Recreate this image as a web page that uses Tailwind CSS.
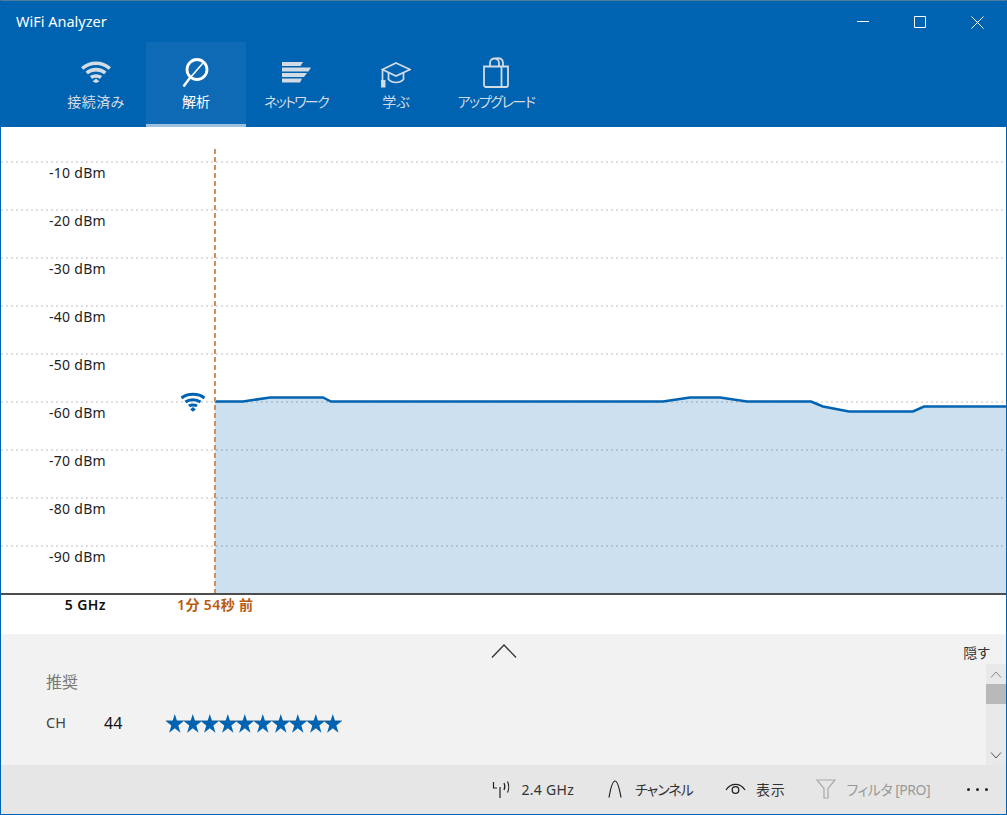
<!DOCTYPE html>
<html lang="ja">
<head>
  <meta charset="UTF-8" />
  <title>WiFi Analyzer</title>
  <script src="https://cdn.jsdelivr.net/npm/@tailwindcss/browser@4"></script>
</head>
<body class="bg-white overflow-hidden">
  <div class="w-[1007px] h-[815px] flex flex-col border border-[#0063b1] border-t-[#4f7d99] font-['Noto_Sans','Noto_Sans_CJK_JP',sans-serif] [font-feature-settings:'palt'] text-[14px] overflow-hidden">

    <!-- title bar -->
    <header class="h-[126px] bg-[#0063b1] flex flex-col shrink-0">
      <div class="h-[41px] flex items-center justify-between">
        <span class="pl-[15px] text-[14.5px] text-white">WiFi Analyzer</span>
        <div class="flex text-white h-[41px]">
          <button class="w-[57px] pl-[22px] pt-[15px] flex items-start">
            <svg width="12" height="12" fill="none" stroke="currentColor"><path d="M0 5.500h12" /></svg>
          </button>
          <button class="w-[57px] pl-[22px] pt-[15px] flex items-start">
            <svg width="12" height="12" fill="none" stroke="currentColor"><path d="M.5.500h11v11H.5z" /></svg>
          </button>
          <button class="w-[57px] pl-[22px] pt-[15px] flex items-start">
            <svg width="13" height="13" fill="none" stroke="currentColor"><path d="M.5.500l12 12M12.500.500l-12 12" /></svg>
          </button>
        </div>
      </div>
      <nav class="flex pl-[45px] h-[85px] text-[14px] text-[#d3dbe4]">
        <a class="w-[100px] flex flex-col items-center">
          <div class="h-[50px] pt-[19px]">
            <svg width="30" height="22" viewBox="0 0 30 22" fill="none" stroke="currentColor" stroke-width="3.600">
              <path d="M1.200 7.500C9 .5 21 .5 28.800 7.500M5.700 12c5-4.500 13.600-4.500 18.600 0M10 16.500c2.500-2 7.500-2 10 0" />
              <path d="M15 17.500l3.500 3-3.500 1.500-3.500-1.500z" fill="currentColor" stroke="none" />
            </svg>
          </div>
          <span class="leading-[20px] tracking-[0.4px]">接続済み</span>
        </a>
        <a class="w-[100px] flex flex-col items-center bg-[#0f6ab5] border-b-[3px] border-[#9cc0de] text-white h-[85px]">
          <div class="h-[50px] pt-[16px]">
            <svg width="28" height="29" viewBox="0 0 28 29" fill="none" stroke="currentColor">
              <circle cx="15" cy="11.500" r="10" stroke-width="2.800" />
              <path d="M21 5L8 20" stroke-width="1.600" />
              <path d="M8.500 19L1.500 28.500" stroke-width="2.400" />
            </svg>
          </div>
          <span class="leading-[20px]">解析</span>
        </a>
        <a class="w-[100px] flex flex-col items-center">
          <div class="h-[50px] pt-[20px]">
            <svg width="30" height="21" viewBox="0 0 30 21" fill="currentColor">
              <path d="M1 0h21l-2.500 4H1zM1 5.500h29l-2.500 4H1zM1 11h25l-3 4H1zM1 16.500h20l-2 4H1z" />
            </svg>
          </div>
          <span class="leading-[20px] tracking-[-1.7px]">ネットワーク</span>
        </a>
        <a class="w-[100px] flex flex-col items-center">
          <div class="h-[50px] pt-[20px]">
            <svg width="30" height="26" viewBox="0 0 30 26" fill="none" stroke="currentColor" stroke-width="1.700">
              <path d="M15 1L29 7.500 15 14 1.500 7.500zM7.500 11v6.500c4 4 11 4 15 0V11M1.500 8v10" />
              <path d="M0 18h4.500v7.500H0z" fill="currentColor" stroke="none" />
            </svg>
          </div>
          <span class="leading-[20px]">学ぶ</span>
        </a>
        <a class="w-[100px] flex flex-col items-center">
          <div class="h-[50px] pt-[15px]">
            <svg width="26" height="31" viewBox="0 0 26 31" fill="none" stroke="currentColor" stroke-width="1.800">
              <path d="M1 9.500h24v18.500a2 2 0 0 1-2 2H3a2 2 0 0 1-2-2zM18.500 9.500V30M7 9.500V6c0-6 9-6 9 0v3.500M11.500 1.500c6-1.500 8.500 1 8.500 4.500v3.500" />
            </svg>
          </div>
          <span class="leading-[20px] tracking-[-1.4px] whitespace-nowrap">アップグレード</span>
        </a>
      </nav>
    </header>

    <!-- chart -->
    <section class="relative h-[468px] shrink-0 border-b-2 border-[#4d4d4d]">
      <svg class="absolute left-0 top-0" width="1005" height="466" fill="none">
        <g stroke="#dedede" stroke-width="2" stroke-dasharray="2 3">
          <path d="M0 35H1005M0 83H1005M0 131H1005M0 179H1005M0 227H1005M0 275H1005M0 323H1005M0 371H1005M0 419H1005" />
        </g>
        <path d="M214 274.500H242L269 270.500H322L330 274.500H662L689 270.500H719L746 274.500H810L822 279.500L848 284.500H912L923 279.500H1005V466H214Z" fill="#0063b1" fill-opacity="0.2" />
        <path d="M214 274.500H242L269 270.500H322L330 274.500H662L689 270.500H719L746 274.500H810L822 279.500L848 284.500H912L923 279.500H1005" stroke="#0063b1" stroke-width="2.500" />
        <path d="M214 22V466" stroke="#c8935f" stroke-width="2" stroke-dasharray="5 3" />
        <g stroke="#0063b1" stroke-width="3">
          <path d="M180.500 271c6-5 17-5 23 0M184.500 275c3.500-3 11-3 15 0M188 279c2-1.500 6-1.500 8 0" />
        </g>
        <path d="M192 280l2.800 2.500-2.800 2.200-2.800-2.200z" fill="#0063b1" />
      </svg>
      <ul class="relative pt-[22px] w-[105px] text-right text-[14px] tracking-[0.3px] text-[#222]">
        <li class="h-[48px] leading-[48px]">-10 dBm</li>
        <li class="h-[48px] leading-[48px]">-20 dBm</li>
        <li class="h-[48px] leading-[48px]">-30 dBm</li>
        <li class="h-[48px] leading-[48px]">-40 dBm</li>
        <li class="h-[48px] leading-[48px]">-50 dBm</li>
        <li class="h-[48px] leading-[48px]">-60 dBm</li>
        <li class="h-[48px] leading-[48px]">-70 dBm</li>
        <li class="h-[48px] leading-[48px]">-80 dBm</li>
        <li class="h-[48px] leading-[48px]">-90 dBm</li>
      </ul>
    </section>

    <!-- axis caption -->
    <div class="h-[39px] shrink-0 flex text-[14px] tracking-[0.4px] font-semibold leading-[20px]">
      <span class="w-[105px] text-right text-[#111]">5 GHz</span>
      <span class="ml-[71px] text-[#b85c10] whitespace-nowrap">1分 54秒 前</span>
    </div>

    <!-- recommendation panel -->
    <section class="flex-1 bg-[#f2f2f2] relative flex flex-col">
      <div class="h-[30px] flex items-center justify-center shrink-0">
        <svg class="mt-[3px]" width="26" height="14" viewBox="0 0 26 14" fill="none" stroke="#333" stroke-width="1.300"><path d="M1 13.500L13 1l12 12.500" /></svg>
      </div>
      <span class="absolute right-[16px] top-[8px] text-[14px] text-[#333]">隠す</span>
      <div class="flex-1 flex justify-between">
        <div class="pl-[45px] pt-[5px]">
          <h3 class="text-[16px] text-[#777] leading-[26px]">推奨</h3>
          <div class="flex items-center mt-[15px] h-[26px]">
            <span class="w-[58px] text-[14.500px] text-[#444]">CH</span>
            <span class="w-[62px] text-[16px] text-[#111]">44</span>
            <div class="relative flex text-[#0063b1]">
              <div class="absolute left-0 right-0 top-[6px] h-px bg-[#8fa9bf]"></div>
              <svg class="relative" width="17.600" height="19" viewBox="0 0 18 18" preserveAspectRatio="none" fill="currentColor"><path d="M9 0l2.300 6.700h7l-5.700 4.200 2.200 6.900L9 13.600l-5.800 4.200 2.200-6.900L-.3 6.700h7z" /></svg>
              <svg class="relative" width="17.600" height="19" viewBox="0 0 18 18" preserveAspectRatio="none" fill="currentColor"><path d="M9 0l2.300 6.700h7l-5.700 4.200 2.200 6.900L9 13.600l-5.800 4.200 2.200-6.900L-.3 6.700h7z" /></svg>
              <svg class="relative" width="17.600" height="19" viewBox="0 0 18 18" preserveAspectRatio="none" fill="currentColor"><path d="M9 0l2.300 6.700h7l-5.700 4.200 2.200 6.900L9 13.600l-5.800 4.200 2.200-6.900L-.3 6.700h7z" /></svg>
              <svg class="relative" width="17.600" height="19" viewBox="0 0 18 18" preserveAspectRatio="none" fill="currentColor"><path d="M9 0l2.300 6.700h7l-5.700 4.200 2.200 6.900L9 13.600l-5.800 4.200 2.200-6.900L-.3 6.700h7z" /></svg>
              <svg class="relative" width="17.600" height="19" viewBox="0 0 18 18" preserveAspectRatio="none" fill="currentColor"><path d="M9 0l2.300 6.700h7l-5.700 4.200 2.200 6.900L9 13.600l-5.800 4.200 2.200-6.900L-.3 6.700h7z" /></svg>
              <svg class="relative" width="17.600" height="19" viewBox="0 0 18 18" preserveAspectRatio="none" fill="currentColor"><path d="M9 0l2.300 6.700h7l-5.700 4.200 2.200 6.900L9 13.600l-5.800 4.200 2.200-6.900L-.3 6.700h7z" /></svg>
              <svg class="relative" width="17.600" height="19" viewBox="0 0 18 18" preserveAspectRatio="none" fill="currentColor"><path d="M9 0l2.300 6.700h7l-5.700 4.200 2.200 6.900L9 13.600l-5.800 4.200 2.200-6.900L-.3 6.700h7z" /></svg>
              <svg class="relative" width="17.600" height="19" viewBox="0 0 18 18" preserveAspectRatio="none" fill="currentColor"><path d="M9 0l2.300 6.700h7l-5.700 4.200 2.200 6.900L9 13.600l-5.800 4.200 2.200-6.900L-.3 6.700h7z" /></svg>
              <svg class="relative" width="17.600" height="19" viewBox="0 0 18 18" preserveAspectRatio="none" fill="currentColor"><path d="M9 0l2.300 6.700h7l-5.700 4.200 2.200 6.900L9 13.600l-5.800 4.200 2.200-6.900L-.3 6.700h7z" /></svg>
              <svg class="relative" width="17.600" height="19" viewBox="0 0 18 18" preserveAspectRatio="none" fill="currentColor"><path d="M9 0l2.300 6.700h7l-5.700 4.200 2.200 6.900L9 13.600l-5.800 4.200 2.200-6.900L-.3 6.700h7z" /></svg>
            </div>
          </div>
        </div>
        <div class="w-[20px] bg-[#e9e9e9] flex flex-col items-center justify-between">
          <div class="w-full">
            <div class="h-[20px] flex items-center justify-center">
              <svg width="12" height="7" fill="none" stroke="#888"><path d="M1 6.500L6 1l5 5.500" /></svg>
            </div>
            <div class="h-[20px] bg-[#b9b9b9]"></div>
          </div>
          <div class="h-[20px] flex items-center justify-center">
            <svg width="12" height="7" fill="none" stroke="#555"><path d="M1 .5L6 6l5-5.500" /></svg>
          </div>
        </div>
      </div>
    </section>

    <!-- command bar -->
    <footer class="h-[49px] pb-[1px] shrink-0 bg-[#e6e6e6] flex items-center justify-end text-[14px] text-[#333]">
      <div class="flex items-center mr-[34px]">
        <svg class="mr-[10px]" width="19" height="17" viewBox="0 0 19 17" fill="none" stroke="#222" stroke-width="1.200">
          <path d="M1.500 1v6h3.500M8 6v11M12 2c1 2 1 5 0 7M15.500 .5c1.500 3 1.500 8 0 11" />
        </svg>
        <span class="tracking-[0.3px]">2.4 GHz</span>
      </div>
      <div class="flex items-center mr-[32px]">
        <svg class="mr-[13px]" width="14" height="18" viewBox="0 0 14 18" fill="none" stroke="#222" stroke-width="1.200">
          <path d="M1 17.500C3 6 5 1 7 1s4 5 6 16.500" />
        </svg>
        <span class="tracking-[-1px]">チャンネル</span>
      </div>
      <div class="flex items-center mr-[31px]">
        <svg class="mr-[10px]" width="21" height="12" viewBox="0 0 21 12" fill="none" stroke="#222" stroke-width="1.300">
          <path d="M1 7c5-7.500 14-7.500 19 0" /><circle cx="10.500" cy="7" r="3.300" />
        </svg>
        <span class="tracking-[0.8px]">表示</span>
      </div>
      <div class="flex items-center mr-[37px] text-[#999]">
        <svg class="mr-[10px]" width="20" height="20" viewBox="0 0 20 20" fill="none" stroke="#aaa" stroke-width="1.200">
          <path d="M1 1h18l-7 8.500V19H8V9.500z" />
        </svg>
        <span class="tracking-[-0.5px]">フィルタ [PRO]</span>
      </div>
      <div class="flex gap-[6px] mr-[18px]">
        <span class="size-[3px] rounded-full bg-[#222]"></span>
        <span class="size-[3px] rounded-full bg-[#222]"></span>
        <span class="size-[3px] rounded-full bg-[#222]"></span>
      </div>
    </footer>
  </div>
</body>
</html>
